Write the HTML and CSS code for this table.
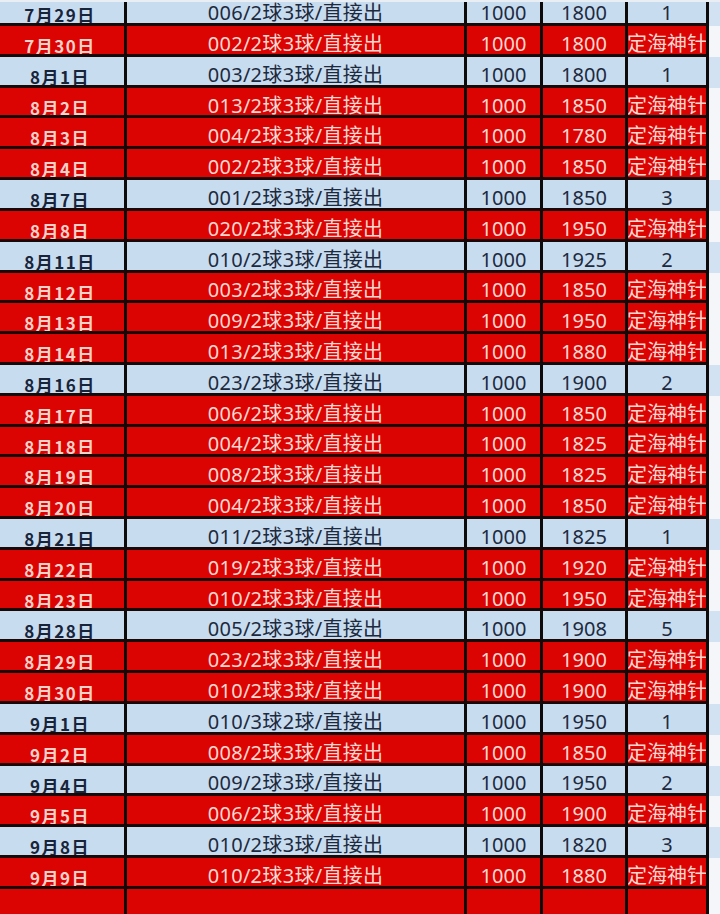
FILE: index.html
```html
<!DOCTYPE html>
<html lang="zh-CN">
<head>
<meta charset="utf-8">
<title>记录表</title>
<link rel="stylesheet" href="styles.css">
</head>
<body>
<div class="sheet">
  <div class="row blue"><div class="c date">7月29日</div><div class="c desc">006/2球3球/直接出</div><div class="c">1000</div><div class="c">1800</div><div class="c">1</div><div class="strip"></div></div>
  <div class="row red"><div class="c date">7月30日</div><div class="c desc">002/2球3球/直接出</div><div class="c">1000</div><div class="c">1800</div><div class="c">定海神针</div><div class="strip"></div></div>
  <div class="row blue"><div class="c date">8月1日</div><div class="c desc">003/2球3球/直接出</div><div class="c">1000</div><div class="c">1800</div><div class="c">1</div><div class="strip"></div></div>
  <div class="row red"><div class="c date">8月2日</div><div class="c desc">013/2球3球/直接出</div><div class="c">1000</div><div class="c">1850</div><div class="c">定海神针</div><div class="strip"></div></div>
  <div class="row red"><div class="c date">8月3日</div><div class="c desc">004/2球3球/直接出</div><div class="c">1000</div><div class="c">1780</div><div class="c">定海神针</div><div class="strip"></div></div>
  <div class="row red"><div class="c date">8月4日</div><div class="c desc">002/2球3球/直接出</div><div class="c">1000</div><div class="c">1850</div><div class="c">定海神针</div><div class="strip"></div></div>
  <div class="row blue"><div class="c date">8月7日</div><div class="c desc">001/2球3球/直接出</div><div class="c">1000</div><div class="c">1850</div><div class="c">3</div><div class="strip"></div></div>
  <div class="row red"><div class="c date">8月8日</div><div class="c desc">020/2球3球/直接出</div><div class="c">1000</div><div class="c">1950</div><div class="c">定海神针</div><div class="strip"></div></div>
  <div class="row blue"><div class="c date">8月11日</div><div class="c desc">010/2球3球/直接出</div><div class="c">1000</div><div class="c">1925</div><div class="c">2</div><div class="strip"></div></div>
  <div class="row red"><div class="c date">8月12日</div><div class="c desc">003/2球3球/直接出</div><div class="c">1000</div><div class="c">1850</div><div class="c">定海神针</div><div class="strip"></div></div>
  <div class="row red"><div class="c date">8月13日</div><div class="c desc">009/2球3球/直接出</div><div class="c">1000</div><div class="c">1950</div><div class="c">定海神针</div><div class="strip"></div></div>
  <div class="row red"><div class="c date">8月14日</div><div class="c desc">013/2球3球/直接出</div><div class="c">1000</div><div class="c">1880</div><div class="c">定海神针</div><div class="strip"></div></div>
  <div class="row blue"><div class="c date">8月16日</div><div class="c desc">023/2球3球/直接出</div><div class="c">1000</div><div class="c">1900</div><div class="c">2</div><div class="strip"></div></div>
  <div class="row red"><div class="c date">8月17日</div><div class="c desc">006/2球3球/直接出</div><div class="c">1000</div><div class="c">1850</div><div class="c">定海神针</div><div class="strip"></div></div>
  <div class="row red"><div class="c date">8月18日</div><div class="c desc">004/2球3球/直接出</div><div class="c">1000</div><div class="c">1825</div><div class="c">定海神针</div><div class="strip"></div></div>
  <div class="row red"><div class="c date">8月19日</div><div class="c desc">008/2球3球/直接出</div><div class="c">1000</div><div class="c">1825</div><div class="c">定海神针</div><div class="strip"></div></div>
  <div class="row red"><div class="c date">8月20日</div><div class="c desc">004/2球3球/直接出</div><div class="c">1000</div><div class="c">1850</div><div class="c">定海神针</div><div class="strip"></div></div>
  <div class="row blue"><div class="c date">8月21日</div><div class="c desc">011/2球3球/直接出</div><div class="c">1000</div><div class="c">1825</div><div class="c">1</div><div class="strip"></div></div>
  <div class="row red"><div class="c date">8月22日</div><div class="c desc">019/2球3球/直接出</div><div class="c">1000</div><div class="c">1920</div><div class="c">定海神针</div><div class="strip"></div></div>
  <div class="row red"><div class="c date">8月23日</div><div class="c desc">010/2球3球/直接出</div><div class="c">1000</div><div class="c">1950</div><div class="c">定海神针</div><div class="strip"></div></div>
  <div class="row blue"><div class="c date">8月28日</div><div class="c desc">005/2球3球/直接出</div><div class="c">1000</div><div class="c">1908</div><div class="c">5</div><div class="strip"></div></div>
  <div class="row red"><div class="c date">8月29日</div><div class="c desc">023/2球3球/直接出</div><div class="c">1000</div><div class="c">1900</div><div class="c">定海神针</div><div class="strip"></div></div>
  <div class="row red"><div class="c date">8月30日</div><div class="c desc">010/2球3球/直接出</div><div class="c">1000</div><div class="c">1900</div><div class="c">定海神针</div><div class="strip"></div></div>
  <div class="row blue"><div class="c date">9月1日</div><div class="c desc">010/3球2球/直接出</div><div class="c">1000</div><div class="c">1950</div><div class="c">1</div><div class="strip"></div></div>
  <div class="row red"><div class="c date">9月2日</div><div class="c desc">008/2球3球/直接出</div><div class="c">1000</div><div class="c">1850</div><div class="c">定海神针</div><div class="strip"></div></div>
  <div class="row blue"><div class="c date">9月4日</div><div class="c desc">009/2球3球/直接出</div><div class="c">1000</div><div class="c">1950</div><div class="c">2</div><div class="strip"></div></div>
  <div class="row red"><div class="c date">9月5日</div><div class="c desc">006/2球3球/直接出</div><div class="c">1000</div><div class="c">1900</div><div class="c">定海神针</div><div class="strip"></div></div>
  <div class="row blue"><div class="c date">9月8日</div><div class="c desc">010/2球3球/直接出</div><div class="c">1000</div><div class="c">1820</div><div class="c">3</div><div class="strip"></div></div>
  <div class="row red"><div class="c date">9月9日</div><div class="c desc">010/2球3球/直接出</div><div class="c">1000</div><div class="c">1880</div><div class="c">定海神针</div><div class="strip"></div></div>
  <div class="row red"><div class="c date"></div><div class="c desc"></div><div class="c"></div><div class="c"></div><div class="c"></div><div class="strip"></div></div>
</div>
</body>
</html>
```

FILE: styles.css
```css
html, body {
  margin: 0;
  padding: 0;
  background: #ffffff;
}
body {
  width: 720px;
  height: 914px;
  overflow: hidden;
  position: relative;
}
body::before {
  content: "";
  position: absolute;
  left: 0;
  top: 0;
  width: 720px;
  height: 2px;
  background: #e9eef5;
  z-index: 2;
}
.sheet {
  margin-top: -4.8px;
  display: flex;
  flex-direction: column;
}
.row {
  display: grid;
  grid-template-columns: 127px 340px 76px 85px 81px 11px;
  height: 30.82px;
  font-family: "Noto Sans", "Noto Sans CJK SC", sans-serif;
  font-size: 20px;
  line-height: 20px;
}
.c {
  box-sizing: border-box;
  height: 30.82px;
  border-right: 3px solid #0e0a0a;
  border-bottom: 3px solid #1a0707;
  display: flex;
  justify-content: center;
  align-items: center;
  padding-top: 8px;
  overflow: hidden;
  white-space: nowrap;
}
.desc {
  letter-spacing: 0.3px;
}
.date {
  font-family: "Noto Sans CJK SC", sans-serif;
  font-weight: 700;
  font-size: 17px;
  line-height: 17px;
  letter-spacing: 1.5px;
  align-items: flex-start;
  padding-top: 11px;
  padding-right: 4px;
}
.blue .c {
  background: #c8dcf0;
  color: #1d2a3d;
}
.blue .date {
  color: #18243a;
}
.red .c {
  background: #dc0303;
  color: #fcd8d0;
}
.red .date {
  color: #fbd2ca;
}
.blue .strip {
  background: #d2e2f2;
}
.red .strip {
  background: #f4f6fa;
}
```
